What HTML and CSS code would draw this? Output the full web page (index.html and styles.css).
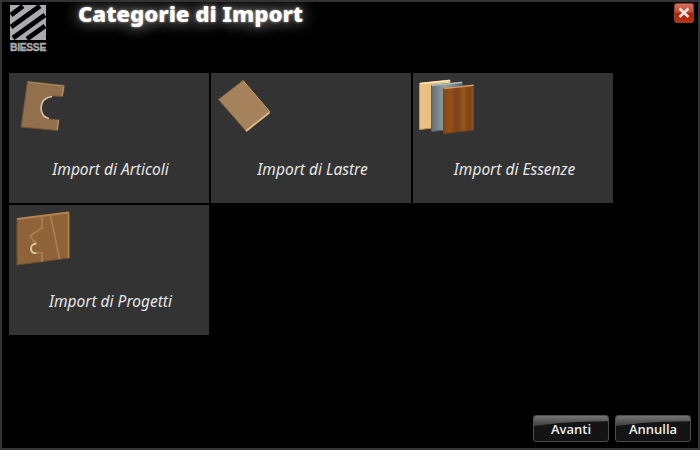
FILE: index.html
```html
<!DOCTYPE html>
<html lang="it">
<head>
<meta charset="utf-8">
<title>Categorie di Import</title>
<link rel="stylesheet" href="styles.css">
</head>
<body>
<div class="window">
  <header class="header">
    <div class="brand">
      <svg class="brand-mark" width="36" height="35" viewBox="0 0 36 35">
        <path fill="#a9abae" d="M0 0H36V35H0Z"/>
        <path d="M1 10L13 1M1 22L30 1M3 33L35 10M17 34L35 21" stroke="#000" stroke-width="4.800"/>
      </svg>
      <span class="brand-name">BIESSE</span>
    </div>
    <h1 class="title">Categorie di Import</h1>
    <button class="close" aria-label="Chiudi">
      <svg width="20" height="20" viewBox="0 0 20 20">
        <defs><linearGradient id="red" x2="0" y2="1"><stop offset="0" stop-color="#cf7560"/><stop offset=".48" stop-color="#bd4930"/><stop offset=".5" stop-color="#aa1d05"/><stop offset="1" stop-color="#bd3215"/></linearGradient></defs>
        <rect x=".5" y=".5" width="19" height="19" rx="2" fill="url(#red)" stroke="#923c2a"/>
        <path d="M5.500 5.500L14.500 14M14.500 5.500L5.500 14" stroke="#f5e4df" stroke-width="2.600"/>
      </svg>
    </button>
  </header>
  <main class="tiles">
    <section class="tile">
      <svg class="icon" width="80" height="65" viewBox="5 68 80 65">
        <path d="M27.5 81.5L64.5 85.5L62.5 96.5L54 96Q44 96 41.5 105Q40 116 49 119L59 119.500L57.500 130.500L21 127Z" fill="#92704d" stroke="#755333"/>
        <path d="M28 82L64 86" stroke="#b28b61"/><path d="M63.500 87L62 96M58.500 120L57 130" stroke="#b78b5a" stroke-width="1.500"/>
        <path d="M52 96.500Q41.500 98 41 108Q41.500 117 49 118.500" fill="none" stroke="#d8c1a4" stroke-width="1.700"/>
      </svg>
      <span class="label">Import di Articoli</span>
    </section>
    <section class="tile">
      <svg class="icon" width="80" height="65" viewBox="207 68 80 65">
        <path d="M243 80.500L270 112L246.500 131.500L218.500 99.500Z" fill="#a6825c" stroke="#886440"/>
        <path d="M243 80.500L270 112" stroke="#c29a6c"/><path d="M269.500 112.500L246 131" stroke="#e1bd8d" stroke-width="1.600"/>
      </svg>
      <span class="label">Import di Lastre</span>
    </section>
    <section class="tile">
      <svg class="icon" width="80" height="67" viewBox="409 68 80 67">
        <defs>
          <linearGradient id="maple"><stop stop-color="#edc184"/><stop offset=".5" stop-color="#e7c080"/><stop offset="1" stop-color="#f2d19a"/></linearGradient>
          <linearGradient id="steel"><stop stop-color="#5f7075"/><stop offset=".45" stop-color="#96a2a3"/><stop offset="1" stop-color="#516368"/></linearGradient>
          <linearGradient id="walnut"><stop stop-color="#854715"/><stop offset=".22" stop-color="#945018"/><stop offset=".45" stop-color="#7b411c"/><stop offset=".68" stop-color="#965719"/><stop offset=".86" stop-color="#7c4219"/><stop offset="1" stop-color="#925119"/></linearGradient>
        </defs>
        <path d="M419.500 83.500L450 80V126L419.500 129.500Z" fill="url(#maple)" stroke="#bf935d"/>
        <path d="M420 83.500L450 80.500" stroke="#ffe8b9" stroke-width="1.500"/>
        <path d="M431.500 85.500L462 82V128L431.500 131.500Z" fill="url(#steel)" stroke="#53656b"/>
        <path d="M432 85.500L462 82.500" stroke="#aabbc0" stroke-width="1.500"/>
        <path d="M443.500 88.500L473.500 85V130L443.500 133.500Z" fill="url(#walnut)" stroke="#7c4219"/>
        <path d="M444 88.500L473.500 85.300" stroke="#cf9b70" stroke-width="1.500"/>
      </svg>
      <span class="label">Import di Essenze</span>
    </section>
    <section class="tile">
      <svg class="icon" width="80" height="67" viewBox="5 200 80 67">
        <path d="M17 219L69 212V258L17 265Z" fill="#8f6338" stroke="#72502e"/>
        <path d="M17 219L69 212.500" stroke="#b68452" stroke-width="2"/>
        <path d="M42 216.500V228L30 236L35.500 243M42 252.500V262M50.500 215L59.500 259M68.500 213V258" fill="none" stroke="#ad7f51" stroke-width="1.700"/>
        <path d="M36.500 243.500Q30.500 244 31 249.500Q32 254 37 253" fill="none" stroke="#e1c6a5" stroke-width="1.800"/>
        <path d="M36 253L42 252.500" stroke="#ad7f51" stroke-width="1.500"/>
      </svg>
      <span class="label">Import di Progetti</span>
    </section>
  </main>
  <footer class="footer">
    <button class="btn"><span>Avanti</span></button>
    <button class="btn"><span>Annulla</span></button>
  </footer>
</div>
</body>
</html>
```
FILE: styles.css
```css
* { box-sizing: border-box; }
body { margin: 0; background: #000; font-family: "Noto Sans", "Open Sans", sans-serif; }
.window { width: 700px; height: 450px; border: 2px solid #333; background: #000; display: flex; flex-direction: column; overflow: hidden; }
.header { height: 71px; flex: none; display: flex; align-items: flex-start; }
.brand { width: 38px; margin: 3px 0 0 7px; display: flex; flex-direction: column; align-items: center; }
.brand-mark { display: block; }
.brand-name { font: bold 10.4px/11px "Liberation Sans", sans-serif; letter-spacing: -.35px; color: #a9abae; margin-top: 2px; -webkit-text-stroke: .4px #a9abae; }
.title { margin: -3px 0 0 31px; font-size: 21px; line-height: 30px; font-weight: 900; color: #fff; white-space: nowrap; letter-spacing: -.1px; transform: scaleX(1.062); transform-origin: left; text-shadow: 0 0 3px #999, 0 0 14px #888, 0 0 20px #555; }
.close { margin: 1px 4px 0 auto; padding: 0; border: 0; background: none; width: 20px; height: 20px; }
.close svg { display: block; }
.tiles { flex: 1; padding-left: 7px; display: grid; grid-template-columns: repeat(3, 200px); grid-auto-rows: 130px; gap: 2px; align-content: start; }
.tile { background: #333; display: flex; flex-direction: column; position: relative; overflow: hidden; }
.icon { position: absolute; left: -4px; top: -5px; }
.label { margin: 85px 0 0 3px; text-align: center; font-size: 15.5px; line-height: 22px; font-style: italic; color: #e6e6e6; letter-spacing: 0; }
.footer { display: flex; justify-content: flex-end; gap: 6px; padding: 0 7px 6px 0; }
.btn { width: 76px; height: 27px; padding: 0; border: 1px solid #4c4c4c; border-radius: 3px; background: #141414; position: relative; overflow: hidden; color: #eee; font: 600 13px/26px "Open Sans", "Noto Sans", sans-serif; }
.btn::before { content: ""; position: absolute; inset: 0 0 auto; height: 10px; background: linear-gradient(#747474, #3e3e3e); clip-path: polygon(0 0, 100% 0, 100% 53%, 65% 57%, 35% 70%, 0 100%); }
.btn span { position: relative; }
```
